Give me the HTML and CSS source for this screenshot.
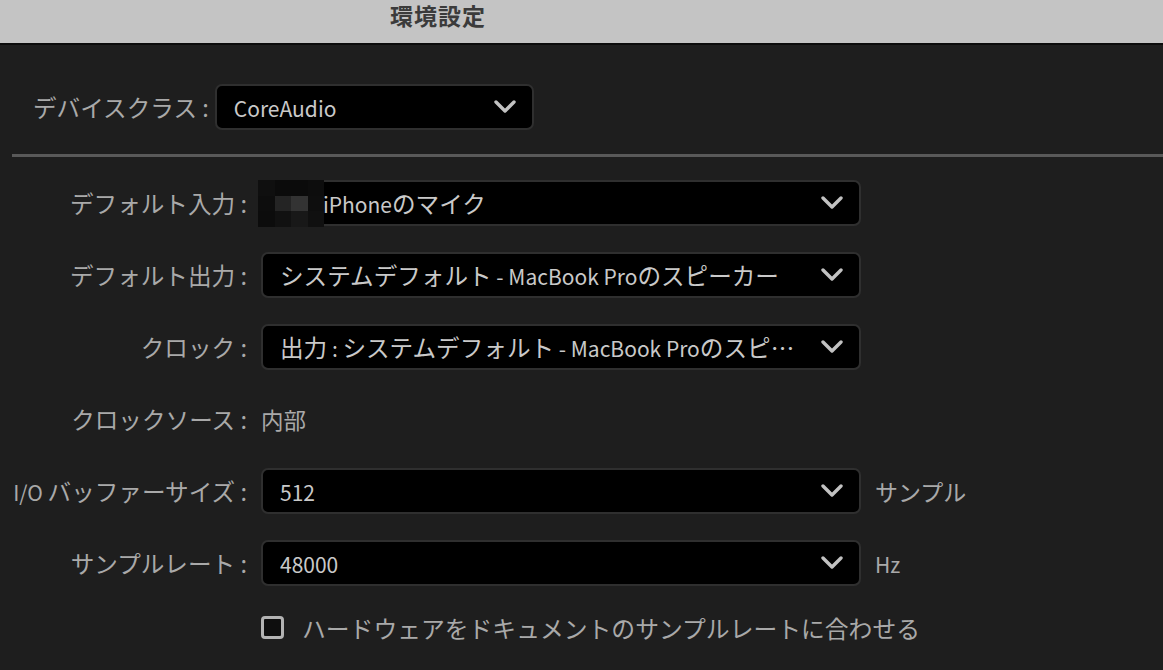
FILE: index.html
```html
<!DOCTYPE html>
<html lang="ja">
<head>
<meta charset="utf-8">
<title>環境設定</title>
<link rel="stylesheet" href="styles.css">
</head>
<body>
<div class="titlebar"><span class="title">環境設定</span></div>

<div class="device-row">
  <span class="label">デバイスクラス :</span>
  <div class="select small">
    <span class="value"><span class="lat">CoreAudio</span></span>
    <svg class="chev" viewBox="0 0 22 14" width="22" height="14"><polyline points="2,2 11,11 20,2"/></svg>
  </div>
</div>

<div class="divider"></div>

<div class="form">
  <span class="label">デフォルト入力 :</span>
  <div class="select">
    <div class="mosaic">
      <i style="background:#0f0f0f"></i><i style="background:#0b0b0b"></i><i style="background:#0b0b0b"></i><i style="background:#0d0d0d"></i>
      <i style="background:#0d0d0d"></i><i style="background:#242424"></i><i style="background:#333333"></i><i style="background:#0e0e0e"></i>
      <i style="background:#0c0c0c"></i><i style="background:#111111"></i><i style="background:#181818"></i><i style="background:#101010"></i>
    </div>
    <span class="value indent"><span class="lat">iPhone</span>のマイク</span>
    <svg class="chev" viewBox="0 0 22 14" width="22" height="14"><polyline points="2,2 11,11 20,2"/></svg>
  </div>
  <span></span>

  <span class="label">デフォルト出力 :</span>
  <div class="select">
    <span class="value">システムデフォルト<span class="lat"> - MacBook Pro</span>のスピーカー</span>
    <svg class="chev" viewBox="0 0 22 14" width="22" height="14"><polyline points="2,2 11,11 20,2"/></svg>
  </div>
  <span></span>

  <span class="label">クロック :</span>
  <div class="select">
    <span class="value clip">出力<span class="lat"> : </span>システムデフォルト<span class="lat"> - MacBook Pro</span>のスピーカー</span>
    <svg class="chev" viewBox="0 0 22 14" width="22" height="14"><polyline points="2,2 11,11 20,2"/></svg>
  </div>
  <span></span>

  <span class="label">クロックソース :</span>
  <span class="plain">内部</span>
  <span></span>

  <span class="label"><span class="lat">I/O </span>バッファーサイズ :</span>
  <div class="select">
    <span class="value"><span class="lat">512</span></span>
    <svg class="chev" viewBox="0 0 22 14" width="22" height="14"><polyline points="2,2 11,11 20,2"/></svg>
  </div>
  <span class="unit">サンプル</span>

  <span class="label">サンプルレート :</span>
  <div class="select">
    <span class="value"><span class="lat">48000</span></span>
    <svg class="chev" viewBox="0 0 22 14" width="22" height="14"><polyline points="2,2 11,11 20,2"/></svg>
  </div>
  <span class="unit"><span class="lat">Hz</span></span>

  <span></span>
  <label class="check">
    <span class="box"></span>
    <span>ハードウェアをドキュメントのサンプルレートに合わせる</span>
  </label>
</div>
</body>
</html>
```

FILE: styles.css
```css
html, body {
  margin: 0;
  padding: 0;
}
body {
  background: #1e1e1e;
  font-family: "Noto Sans CJK JP", sans-serif;
  font-size: 24px;
  color: #a9a9a9;
  overflow: hidden;
}
.lat {
  font-size: 21px;
}
.titlebar {
  height: 43px;
  background: #c4c4c4;
  border-bottom: 2px solid #0c0c0c;
  padding-left: 390px;
}
.title {
  display: block;
  font-size: 23px;
  font-weight: bold;
  color: #3b3b3b;
  line-height: 31px;
  letter-spacing: 1px;
}
.device-row {
  display: flex;
  align-items: center;
  gap: 6px;
  padding: 39px 0 0 33px;
}
.label {
  color: #a9a9a9;
  white-space: nowrap;
  text-align: right;
  font-size: 23.6px;
}
.select {
  position: relative;
  box-sizing: border-box;
  height: 46px;
  width: 600px;
  background: #000;
  border: 2px solid #2f2f2f;
  border-radius: 7px;
  display: flex;
  align-items: center;
  padding: 0 16px 0 17px;
  color: #c9c9c9;
  font-size: 23.6px;
}
.select.small {
  width: 319px;
}
.value {
  flex: 1;
  white-space: nowrap;
  overflow: hidden;
  line-height: 1.45;
}
.value.indent {
  padding-left: 43px;
}
.value.clip {
  text-overflow: ellipsis;
  padding-right: 20px;
}
.chev {
  flex: none;
  fill: none;
  stroke: #c2c2c2;
  stroke-width: 3.4;
  stroke-linecap: round;
  stroke-linejoin: round;
}
.mosaic {
  position: absolute;
  left: -5px;
  top: -2px;
  width: 66px;
  height: 47px;
  display: grid;
  grid-template-columns: repeat(4, 1fr);
  grid-template-rows: repeat(3, 1fr);
}
.divider {
  margin: 24px 0 0 12px;
  height: 3px;
  background: #595959;
}
.form {
  display: grid;
  grid-template-columns: 247px 600px auto;
  column-gap: 14px;
  row-gap: 26px;
  align-items: center;
  margin-top: 23px;
}
.plain {
  height: 46px;
  display: flex;
  align-items: center;
  color: #a9a9a9;
  font-size: 22.5px;
}
.unit {
  color: #a9a9a9;
  font-size: 23px;
}
.check {
  grid-column: 2 / 4;
  display: flex;
  align-items: center;
  gap: 18px;
  height: 30px;
  color: #a9a9a9;
  font-size: 23.8px;
  white-space: nowrap;
}
.box {
  box-sizing: border-box;
  width: 23px;
  height: 23px;
  border: 3px solid #b3b3b3;
  border-radius: 4px;
  background: #0e0e0e;
  flex: none;
}
```
